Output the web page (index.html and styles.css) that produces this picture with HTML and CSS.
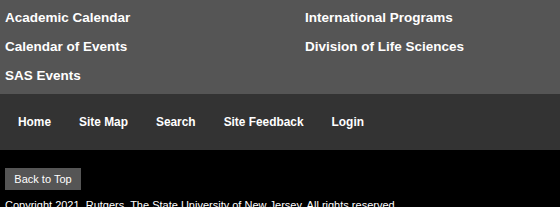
FILE: index.html
```html
<!DOCTYPE html>
<html>
<head>
<meta charset="utf-8">
<link rel="stylesheet" href="styles.css">
</head>
<body>
<div class="links">
  <a href="#">Academic Calendar</a>
  <a href="#">International Programs</a>
  <a href="#">Calendar of Events</a>
  <a href="#">Division of Life Sciences</a>
  <a href="#">SAS Events</a>
</div>
<nav class="nav">
  <a href="#">Home</a>
  <a href="#">Site Map</a>
  <a href="#">Search</a>
  <a href="#">Site Feedback</a>
  <a href="#">Login</a>
</nav>
<footer class="foot">
  <a class="top" href="#">Back to Top</a>
  <p class="copy">Copyright 2021, Rutgers, The State University of New Jersey. All rights reserved.</p>
</footer>
</body>
</html>
```
FILE: styles.css
```css
html, body {
  margin: 0;
  padding: 0;
  background: #000;
  font-family: "Liberation Sans", Arial, sans-serif;
  color: #fff;
}
a { color: #fff; text-decoration: none; }
.links {
  background: #555;
  display: grid;
  grid-template-columns: 300px 1fr;
  padding: 3px 0 4px 5px;
  height: 87px;
}
.links a {
  font-weight: bold;
  font-size: 13.5px;
  line-height: 29px;
  white-space: nowrap;
}
.nav {
  background: #333;
  height: 56px;
  display: flex;
  align-items: center;
  padding-left: 4px;
}
.nav a {
  font-weight: bold;
  font-size: 11.9px;
  padding: 0 14px;
  line-height: 56px;
}
.foot {
  padding: 18px 5px 0;
}
.top {
  display: inline-block;
  background: #555;
  font-size: 11px;
  width: 76px;
  height: 22px;
  line-height: 22px;
  text-align: center;
}
.copy {
  margin: 8px 0 0;
  font-size: 11px;
  line-height: 14px;
}
```
